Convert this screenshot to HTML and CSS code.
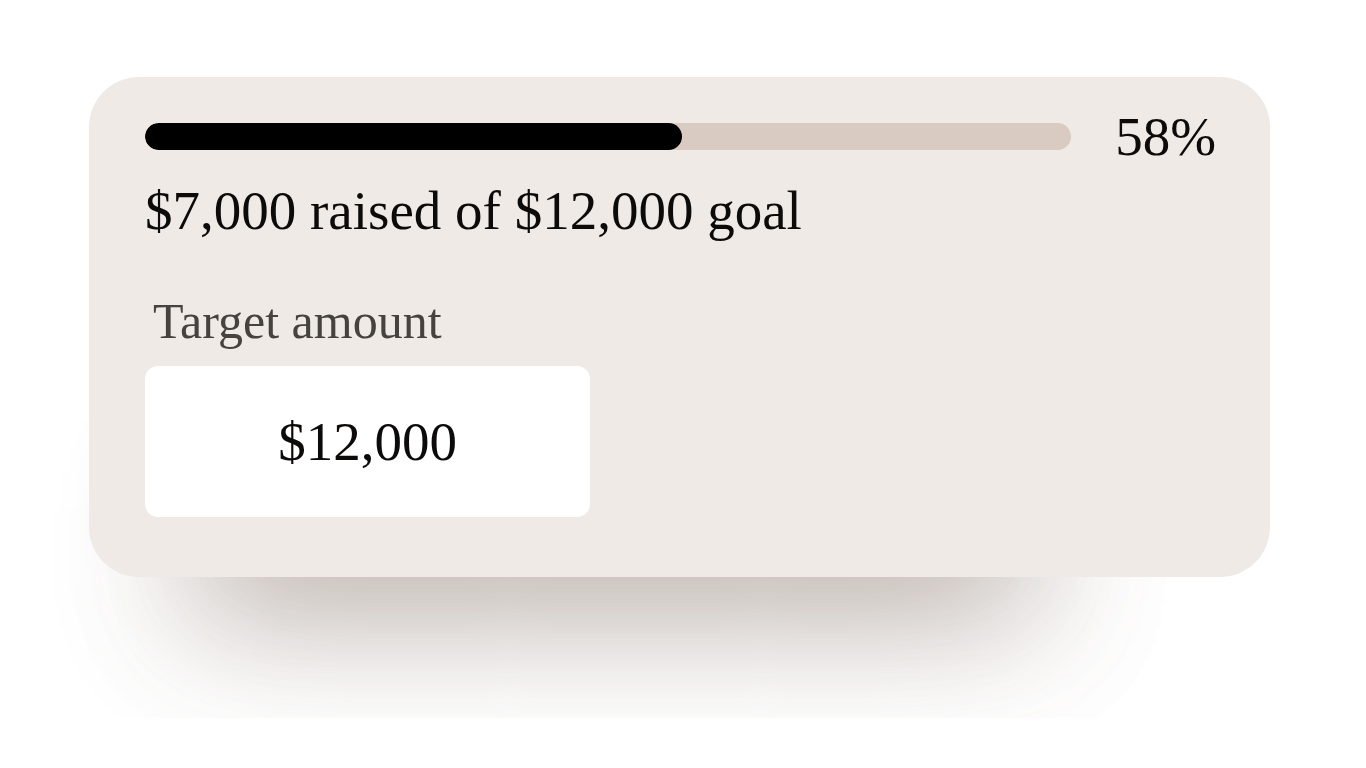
FILE: index.html
```html
<!DOCTYPE html>
<html lang="en">
<head>
<meta charset="utf-8">
<title>Fundraising goal</title>
<link rel="stylesheet" href="styles.css">
</head>
<body>
<div class="stage">
  <section class="card">
    <div class="progress-row">
      <div class="track"><div class="fill" style="width:58%"></div></div>
      <span class="pct">58%</span>
    </div>
    <p class="summary">$7,000 raised of $12,000 goal</p>
    <label class="label" for="target">Target amount</label>
    <div class="input-box" id="target">$12,000</div>
  </section>
</div>
</body>
</html>
```

FILE: styles.css
```css
html, body {
  margin: 0;
  padding: 0;
  background: #ffffff;
}

body {
  font-family: "Liberation Serif", "Times New Roman", serif;
  color: #0d0b0a;
}

.stage {
  height: 718px;
  overflow: hidden;
  padding: 77px 0 0 89px;
  box-sizing: border-box;
}

.card {
  width: 1181px;
  box-sizing: border-box;
  background: #efeae6;
  border-radius: 50px;
  padding: 32px 54px 60px 56px;
  box-shadow:
    -70px 210px 140px -180px rgba(110, 90, 78, 0.45),
    -60px 213px 120px -140px rgba(120, 100, 90, 0.09);
}

.progress-row {
  display: flex;
  align-items: center;
  gap: 44px;
  height: 55px;
}

.track {
  flex: 1;
  height: 27px;
  border-radius: 14px;
  background: #d9cbc1;
  overflow: hidden;
}

.fill {
  height: 100%;
  background: #000000;
  border-radius: 14px;
}

.pct {
  font-size: 55px;
  line-height: 55px;
}

.summary {
  margin: 14px 0 0;
  font-size: 55px;
  line-height: 66px;
}

.label {
  display: block;
  margin: 47px 0 0 8px;
  font-size: 50px;
  line-height: 60px;
  color: #46423f;
}

.input-box {
  margin-top: 15px;
  width: 445px;
  height: 151px;
  background: #ffffff;
  border-radius: 13px;
  display: flex;
  align-items: center;
  justify-content: center;
  font-size: 55px;
}
```
